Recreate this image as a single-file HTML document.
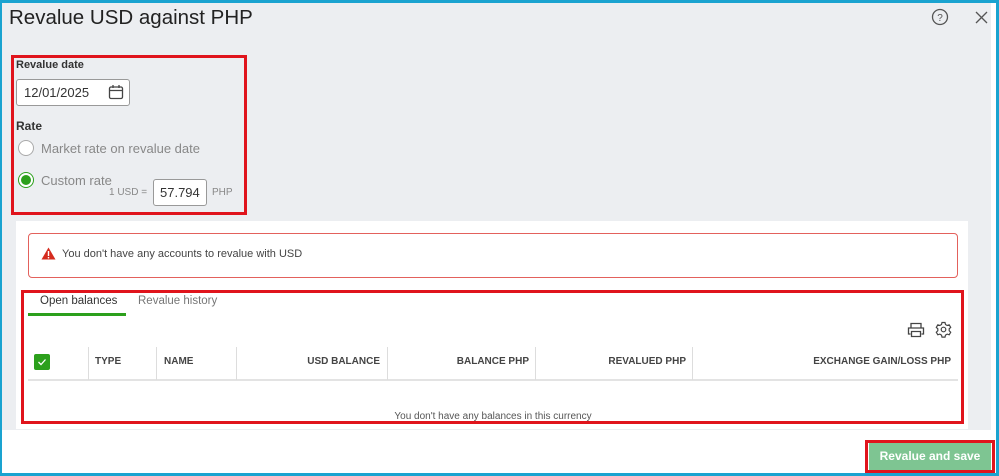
<!DOCTYPE html>
<html><head><style>
*{box-sizing:border-box;margin:0;padding:0}
body{width:999px;height:476px;overflow:hidden;background:#fff;font-family:"Liberation Sans",sans-serif;position:relative;color:#333}
.a{position:absolute}
</style></head><body>
<div class="a" style="left:0;top:0;width:999px;height:476px;border:3px solid #1aa3d0;border-left-width:2px;border-top-width:3px"></div>
<div class="a" style="left:2px;top:3px;width:989px;height:427px;background:#eceef1"></div>
<div class="a" style="left:9px;top:6px;font-size:20.5px;color:#222">Revalue USD against PHP</div>
<svg class="a" style="left:931px;top:8px" width="18" height="18" viewBox="0 0 18 18"><circle cx="9" cy="9" r="7.5" fill="none" stroke="#555" stroke-width="1.3"/><text x="9" y="13" font-size="10" text-anchor="middle" fill="#555" font-family="Liberation Sans">?</text></svg>
<svg class="a" style="left:975px;top:11px" width="13" height="13"><path d="M1 1L12 12M12 1L1 12" stroke="#555" stroke-width="1.3"/></svg>

<div class="a" style="left:11px;top:55px;width:236px;height:160px;border:3px solid #e0141c"></div>
<div class="a" style="left:16px;top:59px;font-size:11px;font-weight:bold;color:#333">Revalue date</div>
<div class="a" style="left:16px;top:79px;width:114px;height:27px;background:#fff;border:1px solid #999;border-radius:3px;font-size:13px;padding:5px 7px;color:#333">12/01/2025</div>
<svg class="a" style="left:108px;top:84px" width="16" height="16"><rect x="1.5" y="3" width="13" height="11.5" rx="1.5" fill="none" stroke="#444" stroke-width="1.3"/><path d="M1.5 6.5h13M5 1v3M11 1v3" stroke="#444" stroke-width="1.3"/></svg>
<div class="a" style="left:16px;top:119px;font-size:12px;font-weight:bold;color:#333">Rate</div>
<div class="a" style="left:18px;top:140px;width:16px;height:16px;border:1px solid #aaa;border-radius:50%;background:#fff"></div>
<div class="a" style="left:41px;top:141px;font-size:13px;color:#888">Market rate on revalue date</div>
<div class="a" style="left:18px;top:172px;width:16px;height:16px;border:1px solid #2ca01c;border-radius:50%;background:#fff"></div>
<div class="a" style="left:21px;top:175px;width:10px;height:10px;border-radius:50%;background:#2ca01c"></div>
<div class="a" style="left:41px;top:173px;font-size:13px;color:#888">Custom rate</div>
<div class="a" style="left:109px;top:187px;font-size:10px;color:#888">1 USD =</div>
<div class="a" style="left:153px;top:179px;width:54px;height:27px;background:#fff;border:1px solid #999;border-radius:3px;font-size:13px;padding:5px 6px;overflow:hidden;white-space:nowrap">57.794</div>
<div class="a" style="left:212px;top:187px;font-size:10px;color:#888">PHP</div>

<div class="a" style="left:16px;top:221px;width:952px;height:208px;background:#fff"></div>
<div class="a" style="left:28px;top:233px;width:930px;height:45px;border:1px solid #e3615c;border-radius:4px"></div>
<svg class="a" style="left:41px;top:247px" width="15" height="13"><path d="M7.5 0.5L14.5 12.5H0.5Z" fill="#d52b1e"/><rect x="6.8" y="4" width="1.4" height="5" fill="#fff"/><rect x="6.8" y="10" width="1.4" height="1.4" fill="#fff"/></svg>
<div class="a" style="left:62px;top:248px;font-size:11px;color:#444">You don't have any accounts to revalue with USD</div>

<div class="a" style="left:21px;top:290px;width:943px;height:134px;border:3px solid #e0141c"></div>
<div class="a" style="left:40px;top:295px;font-size:11.5px;color:#333">Open balances</div>
<div class="a" style="left:138px;top:295px;font-size:11.5px;color:#777">Revalue history</div>
<div class="a" style="left:28px;top:313px;width:98px;height:3px;background:#2ca01c"></div>
<svg class="a" style="left:907px;top:322px" width="18" height="16"><path d="M4 6V1.5h10V6M3.5 12H1.5V6h15v6h-2M4.5 9.5h9v5h-9z" fill="none" stroke="#444" stroke-width="1.3"/></svg>
<svg class="a" style="left:935px;top:321px" width="17" height="17" viewBox="0 0 17 17"><path d="M7 1.5h3l.5 2 1.7 1 2-.7 1.5 2.6-1.5 1.4v2l1.5 1.4-1.5 2.6-2-.7-1.7 1-.5 2H7l-.5-2-1.7-1-2 .7-1.5-2.6 1.5-1.4v-2L1.3 6.4l1.5-2.6 2 .7 1.7-1z" fill="none" stroke="#444" stroke-width="1.2"/><circle cx="8.5" cy="8.5" r="2.3" fill="none" stroke="#444" stroke-width="1.2"/></svg>
<div class="a" style="left:28px;top:379px;width:930px;height:2px;background:#e3e3e3"></div>
<div class="a" style="left:88px;top:347px;width:1px;height:33px;background:#ddd"></div>
<div class="a" style="left:156px;top:347px;width:1px;height:33px;background:#ddd"></div>
<div class="a" style="left:236px;top:347px;width:1px;height:33px;background:#ddd"></div>
<div class="a" style="left:387px;top:347px;width:1px;height:33px;background:#ddd"></div>
<div class="a" style="left:535px;top:347px;width:1px;height:33px;background:#ddd"></div>
<div class="a" style="left:692px;top:347px;width:1px;height:33px;background:#ddd"></div>
<div class="a" style="left:34px;top:354px;width:16px;height:16px;background:#2ca01c;border-radius:2px"></div>
<svg class="a" style="left:37px;top:357px" width="10" height="10"><path d="M1.5 5l2.5 2.5 4.5-5" fill="none" stroke="#fff" stroke-width="1.3"/></svg>
<div class="a" style="top:356px;left:95px;font-size:10px;font-weight:bold;color:#444">TYPE</div>
<div class="a" style="top:356px;left:164px;font-size:10px;font-weight:bold;color:#444">NAME</div>
<div class="a" style="top:356px;left:237px;width:143px;text-align:right;font-size:10px;font-weight:bold;color:#444">USD BALANCE</div>
<div class="a" style="top:356px;left:388px;width:141px;text-align:right;font-size:10px;font-weight:bold;color:#444">BALANCE PHP</div>
<div class="a" style="top:356px;left:536px;width:150px;text-align:right;font-size:10px;font-weight:bold;color:#444">REVALUED PHP</div>
<div class="a" style="top:356px;left:693px;width:258px;text-align:right;font-size:10px;font-weight:bold;color:#444">EXCHANGE GAIN/LOSS PHP</div>
<div class="a" style="top:411px;left:28px;width:930px;text-align:center;font-size:10px;color:#555">You don't have any balances in this currency</div>

<div class="a" style="left:865px;top:440px;width:130px;height:33px;border:3px solid #e0141c"></div>
<div class="a" style="left:869px;top:443px;width:122px;height:27px;background:#7ec592;color:#fff;font-size:12px;font-weight:bold;text-align:center;line-height:27px">Revalue and save</div>
</body></html>
